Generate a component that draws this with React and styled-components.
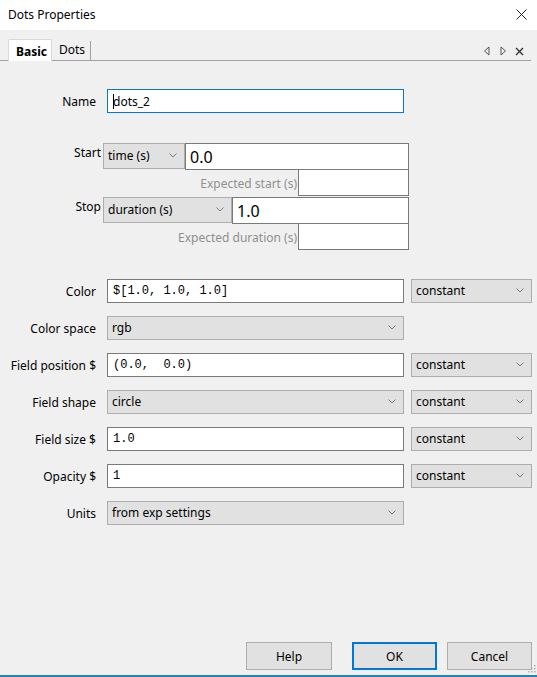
import { createGlobalStyle, styled } from 'styled-components'

const GlobalStyle = createGlobalStyle`
  html, body {
    margin: 0;
    padding: 0;
    background: #f0f0f0;
  }
  body {
    font-family: 'Noto Sans', 'Segoe UI', sans-serif;
    font-size: 12px;
    color: #000;
  }
`

const rows = [
  { label: 'Color', kind: 'text', value: '$[1.0, 1.0, 1.0]', update: 'constant' },
  { label: 'Color space', kind: 'select', value: 'rgb' },
  { label: 'Field position $', kind: 'text', value: '(0.0,  0.0)', update: 'constant' },
  { label: 'Field shape', kind: 'select', value: 'circle', update: 'constant' },
  { label: 'Field size $', kind: 'text', value: '1.0', update: 'constant' },
  { label: 'Opacity $', kind: 'text', value: '1', update: 'constant' },
  { label: 'Units', kind: 'select', value: 'from exp settings' },
]

const Chevron = () => (
  <svg width='8' height='5' viewBox='0 0 8 5'>
    <polyline points='0.5,0.5 4,4 7.5,0.5' fill='none' stroke='#7a7a7a' strokeWidth='1' />
  </svg>
)

const Dropdown = ({ value, width, height = 24 }) => (
  <SelectBox $width={width} $height={height}>
    <span>{value}</span>
    <Chevron />
  </SelectBox>
)

const App = () => {
  return (
    <Window>
      <GlobalStyle />
      <TitleBar>
        <span>Dots Properties</span>
        <svg width='11' height='11' viewBox='0 0 11 11'>
          <path d='M0.5 0.5 L10.5 10.5 M10.5 0.5 L0.5 10.5' stroke='#222' strokeWidth='1' />
        </svg>
      </TitleBar>

      <TabStrip>
        <Tab $active>Basic</Tab>
        <Tab>Dots</Tab>
        <TabTools>
          <svg width='8' height='10' viewBox='0 0 8 10'>
            <polygon points='6,1 1.5,5 6,9' fill='none' stroke='#555' strokeWidth='1' />
          </svg>
          <svg width='8' height='10' viewBox='0 0 8 10'>
            <polygon points='2,1 6.5,5 2,9' fill='none' stroke='#555' strokeWidth='1' />
          </svg>
          <svg width='9' height='9' viewBox='0 0 9 9'>
            <path d='M1 1 L8 8 M8 1 L1 8' stroke='#333' strokeWidth='1.4' />
          </svg>
        </TabTools>
      </TabStrip>

      <Form>
        <NameRow>
          <Label>Name</Label>
          <TextBox $focused>
            <Caret />
            dots_2
          </TextBox>
        </NameRow>

        <Timing>
          <TimingRow>
            <TimingLabel>Start</TimingLabel>
            <Dropdown value='time (s)' width={82} height={26} />
            <BigBox $width={224}>0.0</BigBox>
          </TimingRow>
          <ExpectedRow>
            <ExpectedLabel>Expected start (s)</ExpectedLabel>
            <SmallBox />
          </ExpectedRow>
          <TimingRow>
            <TimingLabel>Stop</TimingLabel>
            <Dropdown value='duration (s)' width={129} height={26} />
            <BigBox $width={177}>1.0</BigBox>
          </TimingRow>
          <ExpectedRow>
            <ExpectedLabel>Expected duration (s)</ExpectedLabel>
            <SmallBox />
          </ExpectedRow>
        </Timing>

        <ParamGrid>
          {rows.map((row) => (
            <ParamRow key={row.label}>
              <Label>{row.label}</Label>
              {row.kind === 'text' ? (
                <TextBox $mono>{row.value}</TextBox>
              ) : (
                <Dropdown value={row.value} width={297} />
              )}
              {row.update ? <Dropdown value={row.update} width={121} /> : <span />}
            </ParamRow>
          ))}
        </ParamGrid>
      </Form>

      <Footer>
        <Button $width={86} $after={20}>Help</Button>
        <Button $width={85} $after={10} $primary>OK</Button>
        <Button $width={85}>Cancel</Button>
        <Grip width='8' height='8' viewBox='0 0 8 8'>
          <rect x='6' y='0' width='1.5' height='1.5' fill='#b0b0b0' />
          <rect x='3' y='3' width='1.5' height='1.5' fill='#b0b0b0' />
          <rect x='6' y='3' width='1.5' height='1.5' fill='#b0b0b0' />
          <rect x='0' y='6' width='1.5' height='1.5' fill='#b0b0b0' />
          <rect x='3' y='6' width='1.5' height='1.5' fill='#b0b0b0' />
          <rect x='6' y='6' width='1.5' height='1.5' fill='#b0b0b0' />
        </Grip>
      </Footer>
    </Window>
  )
}

const Window = styled.div`
  width: 537px;
  height: 677px;
  box-sizing: border-box;
  display: flex;
  flex-direction: column;
  background: #f0f0f0;
  border-bottom: 2px solid #1883d7;
  overflow: hidden;
`

const TitleBar = styled.div`
  height: 30px;
  flex: none;
  background: #fff;
  display: flex;
  align-items: center;
  justify-content: space-between;
  padding: 0 10px 2px 8px;
  box-sizing: border-box;
  font-size: 12px;
`

const TabStrip = styled.div`
  margin: 8px 6px 0 0;
  height: 22px;
  flex: none;
  display: flex;
  align-items: flex-end;
  border-bottom: 1px solid #a0a0a0;
  padding-left: 8px;
`

const Tab = styled.div`
  height: ${(p) => (p.$active ? '22px' : '19px')};
  box-sizing: border-box;
  display: flex;
  align-items: center;
  padding: ${(p) => (p.$active ? '1px 4px 0 7px' : '0 5px 2px 7px')};
  margin-bottom: ${(p) => (p.$active ? '-1px' : '0')};
  font-weight: ${(p) => (p.$active ? 700 : 400)};
  background: ${(p) => (p.$active ? '#fff' : 'transparent')};
  border: ${(p) => (p.$active ? '1px solid #d9d9d9' : 'none')};
  border-bottom: none;
  border-right: ${(p) => (p.$active ? '1px solid #d9d9d9' : '1px solid #a0a0a0')};
  border-radius: ${(p) => (p.$active ? '2px 2px 0 0' : '0')};
`

const TabTools = styled.div`
  margin-left: auto;
  align-self: center;
  display: flex;
  align-items: center;
  gap: 8px;
  padding-right: 7px;
  margin-top: 4px;
`

const Form = styled.div`
  flex: 1;
  display: flex;
  flex-direction: column;
  padding-top: 28px;
`

const NameRow = styled.div`
  display: grid;
  grid-template-columns: 96px 297px;
  column-gap: 11px;
  align-items: center;
  height: 24px;
`

const Label = styled.div`
  text-align: right;
  white-space: nowrap;
`

const TextBox = styled.div`
  height: 24px;
  box-sizing: border-box;
  border: 1px solid ${(p) => (p.$focused ? '#0078d7' : '#7a7a7a')};
  background: #fff;
  display: flex;
  align-items: center;
  padding-left: 5px;
  font-family: ${(p) =>
    p.$mono ? "'Liberation Mono', 'DejaVu Sans Mono', monospace" : 'inherit'};
  font-size: 12px;
  white-space: pre;
`

const Caret = styled.span`
  width: 1px;
  height: 15px;
  background: #000;
  margin-right: -1px;
`

const SelectBox = styled.div`
  width: ${(p) => p.$width}px;
  height: ${(p) => p.$height}px;
  box-sizing: border-box;
  border: 1px solid #adadad;
  background: #e1e1e1;
  display: flex;
  align-items: center;
  justify-content: space-between;
  padding: 0 7px 1px 4px;
  flex: none;
`

const Timing = styled.div`
  margin-top: 30px;
  width: 409px;
  display: flex;
  flex-direction: column;
`

const TimingRow = styled.div`
  display: flex;
  align-items: flex-start;
`

const TimingLabel = styled.div`
  width: 101px;
  padding-right: 2px;
  box-sizing: content-box;
  text-align: right;
  line-height: 18px;
  padding-top: 1px;
`

const BigBox = styled.div`
  width: ${(p) => p.$width}px;
  height: 27px;
  box-sizing: border-box;
  border: 1px solid #7a7a7a;
  background: #fff;
  display: flex;
  align-items: center;
  padding-left: 4px;
  font-size: 16px;
`

const ExpectedRow = styled.div`
  display: flex;
  justify-content: flex-end;
  align-items: center;
  height: 26px;
  margin-bottom: 1px;
`

const ExpectedLabel = styled.div`
  color: #8f8f8f;
  padding-right: 1px;
`

const SmallBox = styled.div`
  width: 111px;
  height: 26px;
  box-sizing: border-box;
  border: 1px solid #7a7a7a;
  border-top-width: 0;
  background: #fff;
`

const ParamGrid = styled.div`
  margin-top: 28px;
  display: flex;
  flex-direction: column;
  gap: 13px;
`

const ParamRow = styled.div`
  display: grid;
  grid-template-columns: 96px 297px 121px;
  column-gap: 11px;
  align-items: center;
  height: 24px;

  & > :nth-child(3) {
    margin-left: -4px;
  }
`

const Footer = styled.div`
  position: relative;
  flex: none;
  height: 33px;
  display: flex;
  align-items: flex-start;
  justify-content: flex-end;
  padding-right: 5px;
  box-sizing: border-box;
`

const Button = styled.div`
  width: ${(p) => p.$width}px;
  margin-right: ${(p) => p.$after || 0}px;
  height: 28px;
  box-sizing: border-box;
  background: #e1e1e1;
  border: ${(p) => (p.$primary ? '2px solid #0078d7' : '1px solid #adadad')};
  display: flex;
  align-items: center;
  justify-content: center;
  font-size: 12px;
`

const Grip = styled.svg`
  position: absolute;
  right: 1px;
  bottom: 2px;
`

export default App
